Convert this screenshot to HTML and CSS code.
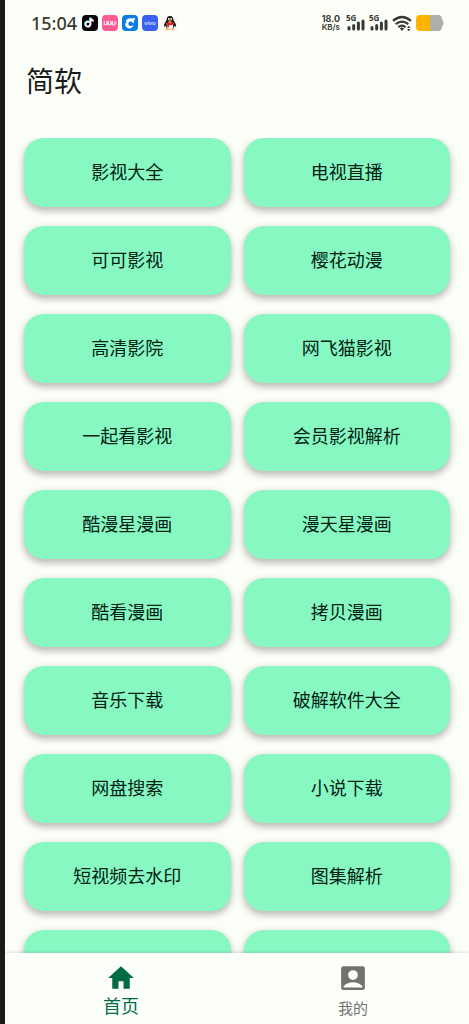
FILE: index.html
```html
<!DOCTYPE html>
<html lang="zh-CN">
<head>
<meta charset="utf-8">
<meta name="viewport" content="width=device-width, initial-scale=1">
<title>简软</title>
<link rel="stylesheet" href="styles.css">
</head>
<body>
<div class="status">
  <div class="status-left">
    <time class="clock">15:04</time>
    <svg class="app-icon" viewBox="0 0 16 16" aria-hidden="true"><rect width="16" height="16" rx="4" fill="#05070d"/><g fill="none" stroke-width="1.9"><path d="M7.7 7.2a2.5 2.5 0 1 0 1.1 2.2V3c.3 1.7 1.4 2.7 3.3 2.8" stroke="#fe2c55"/><path d="M6.7 6.7a2.5 2.5 0 1 0 1.3 2.3V2.8c.3 1.5 1.3 2.4 2.9 2.6" stroke="#25e4df"/><path d="M7.2 7a2.5 2.5 0 1 0 1.2 2.2V3c.3 1.6 1.3 2.5 3.1 2.7" stroke="#fff" stroke-width="1.5"/></g></svg>
    <svg class="app-icon" viewBox="0 0 16 16" aria-hidden="true"><rect width="16" height="16" rx="4" fill="#fb5c94"/><g fill="none" stroke="#ffe2ec" stroke-width="1.1" stroke-linecap="round"><path d="M2.3 6.2v3.5h2.2V8M6.4 6.2v3.5h2.2V8M10.5 6.2v3.5h2.2V8M4.5 6.3v.1M8.6 6.3v.1M12.7 6.3v.1M5.5 7v2M9.6 7v2M13.8 7v2"/></g></svg>
    <svg class="app-icon" viewBox="0 0 16 16" aria-hidden="true"><rect width="16" height="16" rx="4" fill="#087ee1"/><path d="M4 5.5C5.5 3.2 8.3 2.7 10.4 3.6c1.1 0 2-.3 2.7-.8-.1 1.5-.5 2.5-1.4 3.2.4 1 .2 2-.4 2.6-.7-1.7-2.5-2.6-4-1.8-1.5.9-1.4 3.2.3 4 1.5.6 2.9 0 3.9-1-.3 2.7-2.5 4.1-4.7 3.7C4.2 13 2.7 10.4 3.1 8c.6.5 1.2.6 1.7.3C4.1 7.5 3.8 6.5 4 5.5z" fill="#fff"/></svg>
    <svg class="app-icon" viewBox="0 0 16 16" aria-hidden="true"><rect width="16" height="16" rx="4" fill="#3c62ed"/><text class="brand" x="8" y="10" text-anchor="middle">vivo</text></svg>
    <svg class="app-icon" viewBox="0 0 16 16" aria-hidden="true"><rect width="16" height="16" rx="4" fill="#fbf9f6"/><path d="M8 1C5.5 1 4.4 2.9 4.5 5.5 3.3 7.2 1.7 9.5 2 11.2c.1.9.9.5 1.5-.6.2 1.2.7 2 1.3 2.5h6.4c.7-.6 1.1-1.4 1.3-2.5.7 1.1 1.4 1.5 1.5.6.3-1.7-1.2-4-2.5-5.7C11.6 2.9 10.5 1 8 1z" fill="#111"/><ellipse cx="8" cy="10.7" rx="3.2" ry="3.5" fill="#fff"/><path d="M4 7q4 2 8 0v2.2q-2.8 1.3-5 .9v2.2H5.3V9.5L4 9z" fill="#e81c25"/><ellipse cx="6.9" cy="3.9" rx=".9" ry="1.2" fill="#fff"/><ellipse cx="9.2" cy="3.9" rx=".9" ry="1.2" fill="#fff"/><circle cx="7.1" cy="4" r=".45"/><circle cx="9" cy="4" r=".45"/><ellipse cx="8" cy="6" rx="2.1" ry=".8" fill="#f9a21b"/><path d="M3.6 14q1.8-1.6 3.9 0v.8H3.6zM8.5 14q2.1-1.6 3.9 0v.8H8.5z" fill="#f59a1c"/></svg>
  </div>
  <div class="status-right">
    <div class="speed"><b>18.0</b><span>KB/s</span></div>
    <div class="signal"><span>5G</span><svg viewBox="0 0 18 12" aria-hidden="true"><path d="M2 8.5V10M6.7 6.5V10M11.4 4V10M16 2V10" stroke="#373a34" stroke-width="3" stroke-linecap="round"/></svg></div>
    <div class="signal"><span>5G</span><svg viewBox="0 0 18 12" aria-hidden="true"><path d="M2 8.5V10M6.7 6.5V10M11.4 4V10M16 2V10" stroke="#373a34" stroke-width="3" stroke-linecap="round"/></svg></div>
    <svg class="wifi" viewBox="0 0 20 17" aria-hidden="true"><g fill="none" stroke="#373a34" stroke-width="2.2"><path d="M1 5.8Q10-1.8 19 5.8"/><path d="M3.7 9.2Q10 3.9 16.3 9.2"/><path d="M6.3 12.2Q10 9 13.5 12.2"/></g><path d="M7.8 13.3q2.2-1.4 4.4 0L10 16zM15 13l1.8-2.3 1.8 2.3zM15 14l1.8 2.3L18.6 14z" fill="#373a34"/></svg>
    <svg class="battery" viewBox="0 0 28 16" aria-hidden="true"><path d="M14 0h8q4 0 4 4v.5q1.5.8 1.5 3.5T26 11.5v.5q0 4-4 4h-8z" fill="#adafa9"/><path d="M14 0H4Q0 0 0 4v8q0 4 4 4h10z" fill="#ffb400"/></svg>
  </div>
</div>
<header class="topbar"><h1>简软</h1></header>
<main class="list">
  <button class="card" type="button">影视大全</button>
  <button class="card" type="button">电视直播</button>
  <button class="card" type="button">可可影视</button>
  <button class="card" type="button">樱花动漫</button>
  <button class="card" type="button">高清影院</button>
  <button class="card" type="button">网飞猫影视</button>
  <button class="card" type="button">一起看影视</button>
  <button class="card" type="button">会员影视解析</button>
  <button class="card" type="button">酷漫星漫画</button>
  <button class="card" type="button">漫天星漫画</button>
  <button class="card" type="button">酷看漫画</button>
  <button class="card" type="button">拷贝漫画</button>
  <button class="card" type="button">音乐下载</button>
  <button class="card" type="button">破解软件大全</button>
  <button class="card" type="button">网盘搜索</button>
  <button class="card" type="button">小说下载</button>
  <button class="card" type="button">短视频去水印</button>
  <button class="card" type="button">图集解析</button>
  <button class="card" type="button"></button>
  <button class="card" type="button"></button>
</main>
<nav class="tabs">
  <a class="tab tab-active" href="#home" aria-current="page">
    <svg viewBox="0 0 24 24" aria-hidden="true"><path d="M10 20.5v-6h4v6h5V12h3.300L12 2.600 1.700 12H5v8.500z"/></svg>
    <span>首页</span>
  </a>
  <a class="tab" href="#mine">
    <svg viewBox="0 0 24 24" aria-hidden="true"><path d="M4.500 2.500h15q2 0 2 2v15q0 2-2 2h-15q-2 0-2-2v-15q0-2 2-2zM12 5.700a3.900 3.900 0 1 0 0 7.800A3.900 3.900 0 0 0 12 5.700zM4.500 19.500h15v-1c-1.700-2.200-4.800-3.200-7.500-3.200s-5.800 1-7.500 3.200z" fill-rule="evenodd"/></svg>
    <span>我的</span>
  </a>
</nav>
</body>
</html>
```

FILE: styles.css
```css
* {
  box-sizing: border-box;
}

body {
  margin: 0;
  height: 100vh;
  display: flex;
  flex-direction: column;
  overflow: hidden;
  border-left: 5px solid #1a1a1a;
  background: #fcfff8;
  color: #191c1a;
  font-family: "Noto Sans", "Noto Sans CJK SC", sans-serif;
}

.status {
  display: flex;
  justify-content: space-between;
  align-items: center;
  height: 46px;
  padding: 0 25px 0 26px;
  color: #373a34;
}

.status-left,
.status-right {
  display: flex;
  align-items: center;
  gap: 4px;
}

.clock {
  margin-right: 1px;
  font-size: 18px;
  line-height: 20px;
  font-weight: 500;
}

.app-icon {
  width: 16px;
  height: 16px;
}

.brand {
  fill: #fff;
  font-size: 6px;
  font-weight: 400;
}

.speed {
  display: flex;
  flex-direction: column;
  align-items: center;
  margin-right: 2px;
  font-family: Inter, sans-serif;
  font-size: 8px;
  line-height: 9px;
  font-weight: 600;
}

.speed b {
  font-size: 9px;
  font-weight: 700;
}

.signal {
  display: flex;
  flex-direction: column;
  font-size: 8px;
  line-height: 6px;
  font-weight: 700;
}

.signal svg {
  width: 18px;
  height: 12px;
  margin: -2px 0 0 1px;
}

.wifi {
  width: 20px;
  height: 17px;
}

.battery {
  width: 28px;
  height: 16px;
}

.topbar {
  height: 92px;
  padding: 15px 21px;
}

.topbar h1 {
  margin: 0;
  font-size: 28px;
  line-height: 40px;
  font-weight: 400;
}

.list {
  flex: 1;
  min-height: 0;
  overflow: hidden;
  display: grid;
  grid-template-columns: 1fr 1fr;
  grid-auto-rows: 69px;
  gap: 19px 13px;
  padding: 0 19px;
}

.card {
  padding: 0 8px 2px;
  border: 0;
  border-radius: 20px;
  background: #88f8c3;
  box-shadow: 0 4px 7px rgba(60, 40, 40, 0.28), 0 1px 10px rgba(60, 40, 40, 0.1);
  color: #002113;
  font: inherit;
  font-size: 18px;
  line-height: 24px;
}

.tabs {
  position: relative;
  display: flex;
  height: 71px;
  background: #fcfff8;
  box-shadow: 0 -1px 3px rgba(0, 0, 0, 0.12);
}

.tab {
  flex: 1;
  display: flex;
  flex-direction: column;
  align-items: center;
  padding-top: 10px;
  gap: 3px;
  color: #70736e;
  font-size: 15px;
  line-height: 24px;
  text-decoration: none;
}

.tab svg {
  width: 30px;
  height: 30px;
  flex: none;
  fill: currentColor;
}

.tab-active {
  gap: 1px;
  color: #006c46;
  font-size: 18px;
}
```
